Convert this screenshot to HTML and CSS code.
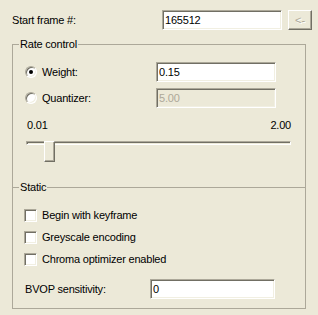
FILE: index.html
```html
<!DOCTYPE html>
<html lang="en">
<head>
    <meta charset="UTF-8">
    <title>Encoder settings</title>
    <link rel="stylesheet" href="styles.css">
</head>
<body>
    <div class="dialog">
        <!-- Start frame -->
        <div class="top-row">
            <span>Start frame #:</span>
            <input class="field" type="text" value="165512">
            <button class="btn" disabled>&lt;-</button>
        </div>

        <!-- Rate control -->
        <fieldset class="group rate">
            <legend>Rate control</legend>
            <div class="group-body">
                <div class="opt-list">
                    <div class="opt-row">
                        <label class="opt"><span class="radio checked"></span>Weight:</label>
                        <input class="field" type="text" value="0.15">
                    </div>
                    <div class="opt-row">
                        <label class="opt"><span class="radio"></span>Quantizer:</label>
                        <input class="field" type="text" value="5.00" disabled>
                    </div>
                </div>

                <div class="slider">
                    <div class="slider-labels">
                        <span>0.01</span>
                        <span>2.00</span>
                    </div>
                    <div class="slider-bar">
                        <div class="slider-track"></div>
                        <div class="slider-thumb"></div>
                    </div>
                </div>
            </div>
        </fieldset>

        <!-- Static -->
        <fieldset class="group static">
            <legend>Static</legend>
            <div class="group-body">
                <div class="check-list">
                    <label class="check-row"><span class="checkbox"></span>Begin with keyframe</label>
                    <label class="check-row"><span class="checkbox"></span>Greyscale encoding</label>
                    <label class="check-row"><span class="checkbox"></span>Chroma optimizer enabled</label>
                </div>
                <div class="bvop-row">
                    <span>BVOP sensitivity:</span>
                    <input class="field" type="text" value="0">
                </div>
            </div>
        </fieldset>
    </div>
</body>
</html>
```

FILE: styles.css
```css
* {
    box-sizing: border-box;
}

body {
    margin: 0;
    background: #ece9d8;
    color: #000;
    font: 11px/13px "Liberation Sans", Arial, sans-serif;
    letter-spacing: -0.2px;
}

.dialog {
    width: 318px;
    padding: 10px 12px 0 12px;
}

.top-row {
    display: grid;
    grid-template-columns: 144px 120px 24px;
    column-gap: 6px;
    align-items: center;
    height: 20px;
}

.field {
    width: 120px;
    height: 20px;
    margin: 0;
    padding: 0 2px;
    font: inherit;
    letter-spacing: inherit;
    color: #000;
    background: #fff;
    border: 1px solid;
    border-color: #aca899 #fff #fff #aca899;
    box-shadow: inset 1px 1px 0 #716f64, inset -1px -1px 0 #f1efe2;
    outline: none;
}

.field:disabled {
    background: #ece9d8;
    color: #aca899;
}

.btn {
    width: 24px;
    height: 20px;
    padding: 0;
    font: inherit;
    color: #aca899;
    text-shadow: 1px 1px 0 #fff;
    background: #ece9d8;
    border: 1px solid;
    border-color: #fff #716f64 #716f64 #fff;
    box-shadow: inset -1px -1px 0 #aca899;
}

.group {
    margin: 0;
    padding: 0;
    border: 1px solid #aca899;
}

.group legend {
    margin-left: 6px;
    padding: 0 1px;
    line-height: 13px;
    background: #ece9d8;
}

.rate {
    margin-top: 8px;
}

.rate .group-body {
    padding: 11px 0 25px 12px;
}

.opt-list {
    display: flex;
    flex-direction: column;
    gap: 6px;
}

.opt-row {
    display: grid;
    grid-template-columns: 131px 120px;
    align-items: center;
    height: 20px;
}

.opt {
    display: flex;
    align-items: center;
    gap: 5px;
}

.radio {
    display: grid;
    place-items: center;
    width: 12px;
    height: 12px;
    border-radius: 50%;
    background: #fff;
    border: 1px solid;
    border-color: #aca899 #fff #fff #aca899;
    box-shadow: inset 1px 1px 0 #716f64, inset -1px -1px 0 #f1efe2;
}

.radio.checked::after {
    content: "";
    width: 4px;
    height: 4px;
    border-radius: 50%;
    background: #000;
}

.slider {
    width: 265px;
    margin: 11px 0 0 1px;
}

.slider-labels {
    display: flex;
    justify-content: space-between;
    padding-left: 1px;
}

.slider-bar {
    position: relative;
    height: 21px;
    margin-top: 3px;
}

.slider-track {
    height: 4px;
    margin-top: 9px;
    border: 1px solid;
    border-color: #aca899 #fff #fff #aca899;
    box-shadow: inset 1px 1px 0 #716f64;
}

.slider-thumb {
    position: absolute;
    left: 18px;
    top: 0;
    width: 11px;
    height: 21px;
    background: #ece9d8;
    border: 1px solid;
    border-color: #fff #716f64 #716f64 #fff;
    box-shadow: inset -1px -1px 0 #aca899;
}

.static {
    margin-top: -7px;
}

.static .group-body {
    padding: 15px 0 9px 12px;
}

.check-list {
    display: flex;
    flex-direction: column;
    gap: 9px;
    margin-left: -1px;
}

.check-row {
    display: flex;
    align-items: center;
    gap: 5px;
    height: 13px;
}

.checkbox {
    width: 13px;
    height: 13px;
    background: #fff;
    border: 1px solid;
    border-color: #aca899 #fff #fff #aca899;
    box-shadow: inset 1px 1px 0 #716f64, inset -1px -1px 0 #f1efe2;
}

.bvop-row {
    display: grid;
    grid-template-columns: 125px 125px;
    align-items: center;
    height: 20px;
    margin-top: 13px;
}

.bvop-row .field {
    width: 125px;
}
```
